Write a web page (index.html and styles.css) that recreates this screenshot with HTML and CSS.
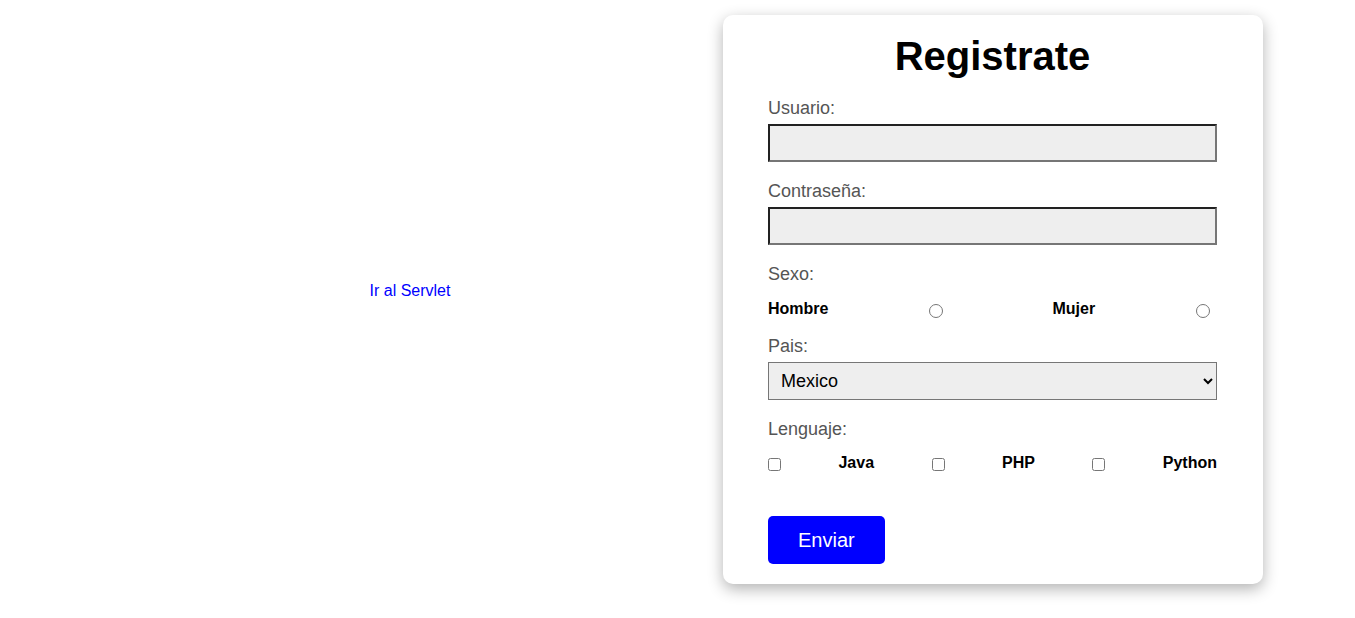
FILE: index.html
```html
<!DOCTYPE html>
<html lang="es">
<head>
<meta charset="utf-8">
<title>Registrate</title>
<link rel="stylesheet" href="styles.css">
</head>
<body>
<main class="page">
  <div class="side">
    <a class="servlet-link" href="#">Ir al Servlet</a>
  </div>
  <form class="card">
    <h1 class="title">Registrate</h1>
    <label class="field-label" for="usuario">Usuario:</label>
    <input class="text-input" type="text" id="usuario">
    <label class="field-label" for="pass">Contraseña:</label>
    <input class="text-input" type="password" id="pass">
    <span class="field-label">Sexo:</span>
    <div class="radio-row">
      <span class="opt">Hombre</span>
      <input class="radio r1" type="radio" name="sexo">
      <span class="opt mujer">Mujer</span>
      <input class="radio r2" type="radio" name="sexo">
    </div>
    <label class="field-label pais" for="pais">Pais:</label>
    <select class="select" id="pais">
      <option>Mexico</option>
    </select>
    <span class="field-label">Lenguaje:</span>
    <div class="check-row">
      <input class="check" type="checkbox">
      <span class="opt">Java</span>
      <input class="check" type="checkbox">
      <span class="opt">PHP</span>
      <input class="check" type="checkbox">
      <span class="opt">Python</span>
    </div>
    <button class="submit" type="button">Enviar</button>
  </form>
</main>
</body>
</html>
```

FILE: styles.css
```css
html, body {
  margin: 0;
  padding: 0;
  background: #fff;
  font-family: "Liberation Sans", Arial, sans-serif;
}

.page {
  display: flex;
  align-items: flex-start;
  min-height: 100vh;
  box-sizing: border-box;
  padding: 15px 0 0 97px;
}

.side {
  width: 626px;
  flex: 0 0 626px;
  text-align: center;
  margin-top: 267px;
}

.servlet-link {
  color: #0000ff;
  text-decoration: none;
  font-size: 16px;
  line-height: 18px;
}

.card {
  width: 540px;
  box-sizing: border-box;
  padding: 20px 46px 20px 45px;
  background: #fff;
  border-radius: 10px;
  box-shadow: 0 5px 15px rgba(0, 0, 0, 0.3);
  display: flex;
  flex-direction: column;
}

.title {
  margin: -2px 0 19px;
  font-size: 40px;
  line-height: 46px;
  font-weight: bold;
  text-align: center;
  color: #000;
}

.field-label {
  display: block;
  font-size: 18px;
  line-height: 21px;
  color: #555;
  margin-bottom: 5px;
}

.text-input {
  display: block;
  width: 100%;
  box-sizing: border-box;
  height: 38px;
  margin: 0 0 19px;
  background: #eee;
  font-size: 16px;
  font-family: inherit;
}

.radio-row,
.check-row {
  display: flex;
  align-items: center;
  height: 18px;
  margin-top: 9px;
}

.radio-row {
  margin-top: 10px;
}

.opt {
  font-size: 16px;
  line-height: 18px;
  font-weight: bold;
  color: #000;
}

.radio {
  width: 14px;
  height: 14px;
  margin: 4px 0 0;
  flex: 0 0 auto;
}

.r1 { margin-left: 101px; }
.mujer { margin-left: 109px; }
.r2 { margin-left: 101px; }

.pais {
  margin-top: 18px;
}

.select {
  display: block;
  width: 100%;
  box-sizing: border-box;
  height: 38px;
  margin: 0 0 19px;
  padding: 0 8px;
  background-color: #eee;
  border: 1px solid #767676;
  border-radius: 0;
  font-size: 18px;
  font-family: inherit;
  color: #000;
}

.check-row {
  justify-content: space-between;
}

.check {
  width: 13px;
  height: 13px;
  margin: 2px 0 0;
}

.submit {
  align-self: flex-start;
  margin-top: 44px;
  height: 48px;
  padding: 0 30px;
  background: #0000ff;
  color: #fff;
  border: none;
  border-radius: 5px;
  font-size: 20px;
  font-family: inherit;
  cursor: pointer;
}
```
